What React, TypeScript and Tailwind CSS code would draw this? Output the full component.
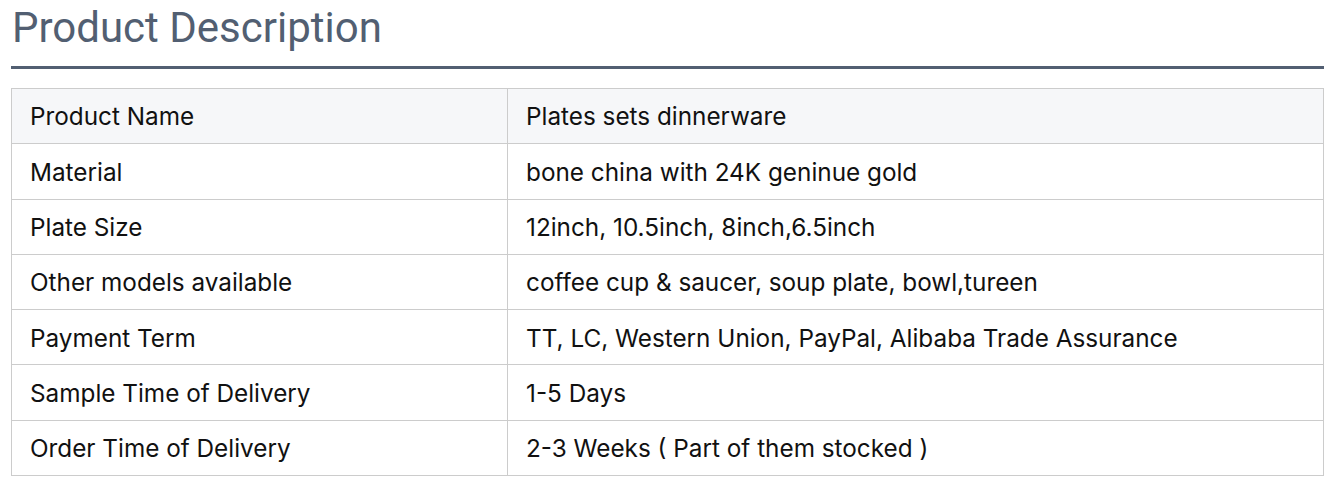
import React from "react";

const rows: [string, string][] = [
  ["Product Name", "Plates sets dinnerware"],
  ["Material", "bone china with 24K geninue gold"],
  ["Plate Size", "12inch, 10.5inch, 8inch,6.5inch"],
  ["Other models available", "coffee cup & saucer, soup plate, bowl,tureen"],
  ["Payment Term", "TT, LC, Western Union, PayPal, Alibaba Trade Assurance"],
  ["Sample Time of Delivery", "1-5 Days"],
  ["Order Time of Delivery", "2-3 Weeks ( Part of them stocked )"],
];

export default function App() {
  return (
    <div className="w-[1336px] h-[486px] bg-white pl-[11px] pr-[12px] pt-[3px]" style={{ fontFamily: "Inter, 'Noto Sans', sans-serif" }}>
      <h2 className="text-[42px] leading-[50px] text-[#525f72] pl-[1px] pb-[13px] border-b-[3px] border-[#525f72]" style={{ fontFamily: "Roboto, sans-serif" }}>
        Product Description
      </h2>
      <table className="mt-[19px] w-full border-collapse text-[24.3px] text-[#111]">
        <tbody>
          {rows.map(([k, v], i) => (
            <tr key={k} className={i === 0 ? "bg-[#f6f7f9]" : "bg-white"}>
              <td className="w-[496px] h-[55.3px] border border-[#cccccc] pl-[18px] pt-[1px] align-middle">{k}</td>
              <td className="h-[55.3px] border border-[#cccccc] pl-[18px] pt-[1px] align-middle">{v}</td>
            </tr>
          ))}
        </tbody>
      </table>
    </div>
  );
}
